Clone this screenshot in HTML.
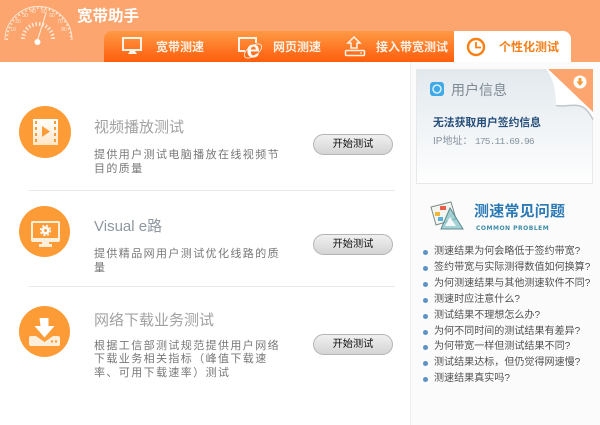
<!DOCTYPE html>
<html lang="zh"><head><meta charset="utf-8"><style>
*{margin:0;padding:0;box-sizing:border-box}
html,body{width:600px;height:425px;overflow:hidden;background:#fff}
body{position:relative;font-family:"Liberation Sans","WenQuanYi Zen Hei","Noto Sans CJK SC",sans-serif}
.a{position:absolute;white-space:nowrap}
.h{left:0;top:0;width:600px;height:62px;background:#fca56f}
.tabs{left:104px;top:31px;width:350px;height:31px;background:linear-gradient(#fd9a45,#ff5e0c);border-radius:8px 0 0 0}
.on{left:454px;top:31px;width:117px;height:31px;background:#fff;border-radius:0 8px 0 0}
.t{top:40px;font-size:12px;line-height:14px;color:#fff0e4;font-weight:bold}
.c{left:19px;width:52px;height:52px;border-radius:50%;background:#fd9b37}
.ti{left:94px;font-size:15px;line-height:18px;color:#a2a2a2}
.d{left:94px;font-size:11px;line-height:13.500px;letter-spacing:1.400px;color:#777;white-space:nowrap}
.b{left:313px;width:80px;height:21px;border-radius:11px;background:linear-gradient(#f0f0f0,#d4d4d4);border:1px solid #b5b5b5;font-size:10.200px;line-height:19px;text-align:center;color:#111}
.hr{left:28px;width:367px;height:1px;background:#eaeaea}
.side{left:410px;top:62px;width:190px;height:363px;background:#fbfbfb;border-left:1px solid #eee}
.card{left:416px;top:69px;width:177px;height:115px;background:linear-gradient(#e2e9ed,#fafbfc 85%,#fff);border:1px solid #e8e8e8}
ul{left:422px;top:244px;list-style:none;font-size:10.050px;line-height:15.900px;color:#505050}
li{padding-left:12px;position:relative}
li:before{content:"";position:absolute;left:1px;top:6px;width:5px;height:5px;border-radius:50%;background:#5b93c7}
</style></head><body>
<div class="a h"></div>
<svg class="a" style="left:0;top:0" width="76" height="48" viewBox="0 0 76 48" fill="none" stroke="#ffe6d2">
<path d="M7 39A31 31 0 1 1 71 39" stroke-width="2" stroke-dasharray="1.500 2.500" transform="translate(0 1)"/>
<path d="M5 40A33.500 33.500 0 0 1 72 40" stroke-width="1"/>
<path d="M23 39A15 15 0 0 1 53 39" stroke-width="4" stroke-dasharray="1.500 2"/>
<path d="M37 42L46 13" stroke-width="1.200"/>
<circle cx="37.500" cy="42" r="3" fill="#fff" stroke="none"/>
<g font-size="5" fill="#ffeadb" stroke="none" font-family="Liberation Sans,sans-serif" text-anchor="middle"><text x="13" y="31">10</text><text x="18" y="23">20</text><text x="25" y="17">30</text><text x="33" y="13">40</text><text x="44" y="13">50</text><text x="52" y="17">60</text><text x="60" y="23">70</text><text x="64" y="31">80</text></g>
</svg>
<div class="a" style="left:77px;top:8px;font-size:15.500px;line-height:18px;font-weight:bold;color:#fff">宽带助手</div>
<div class="a tabs"></div><div class="a on"></div>
<svg class="a" style="left:120px;top:36px" width="26" height="20" viewBox="0 0 26 20" fill="none"><rect x="3" y="2" width="18" height="12" stroke="#fff3e8" stroke-width="2"/><path d="M8 18h9l-2-3h-5z" fill="#fff3e8"/></svg>
<div class="a t" style="left:156px">宽带测速</div>
<svg class="a" style="left:236px;top:36px" width="30" height="26" viewBox="0 0 30 26" fill="none"><path d="M9 15H3V2h17v5" stroke="#fff3e8" stroke-width="2"/><text x="10.500" y="21.500" font-family="Liberation Sans,sans-serif" font-size="24" font-weight="bold" fill="#fffaf4">e</text><ellipse cx="17" cy="15" rx="10" ry="5" transform="rotate(-35 17 15)" stroke="#fff3e8" stroke-width=".8"/></svg>
<div class="a t" style="left:273px">网页测速</div>
<svg class="a" style="left:343px;top:35px" width="24" height="22" viewBox="0 0 24 22" fill="none" stroke="#fff3e8" stroke-width="1.500"><path d="M11 2l6 6h-3v5H8V8H5z"/><rect x="2.500" y="15.500" width="19" height="5" rx="1"/><path d="M17 18h2" stroke-width="1"/></svg>
<div class="a t" style="left:376px">接入带宽测试</div>
<svg class="a" style="left:465px;top:36px" width="22" height="22" viewBox="0 0 22 22" fill="none" stroke="#fa7f12" stroke-width="2.400"><circle cx="11" cy="11" r="8"/><path d="M11 6v5.500h5" stroke-width="1.800"/></svg>
<div class="a t" style="left:499px;color:#f57f1a">个性化测试</div>

<div class="a c" style="top:106px"></div>
<svg class="a" style="left:32px;top:118px" width="27" height="28" viewBox="0 0 27 28"><defs><linearGradient id="g" x1="0" y1="0" x2="0" y2="1"><stop offset="0" stop-color="#fff"/><stop offset="1" stop-color="#ffe6c6"/></linearGradient></defs><rect x="1" y="1" width="25" height="26" fill="url(#g)"/><path d="M3 3h2v3H3zM3 9h2v3H3zM3 15h2v3H3zM3 21h2v3H3zM22 3h2v3h-2zM22 9h2v3h-2zM22 15h2v3h-2zM22 21h2v3h-2z" fill="#fd9b37"/><path d="M10 8l8 5.500-8 5.500z" fill="#fd9b37"/></svg>
<div class="a ti" style="top:119px">视频播放测试</div>
<div class="a d" style="top:149px">提供用户测试电脑播放在线视频节<br>目的质量</div>
<div class="a b" style="top:134px">开始测试</div>
<div class="a hr" style="top:190px"></div>

<div class="a c" style="top:206px;height:51px;width:51px"></div>
<svg class="a" style="left:30px;top:221px" width="32" height="27" viewBox="0 0 32 27"><path d="M3 0h25a2 2 0 0 1 2 2v17a2 2 0 0 1-2 2H19v2h3v3H9v-3h3v-2H3a2 2 0 0 1-2-2V2a2 2 0 0 1 2-2z" fill="#fff0dc"/><rect x="3" y="2" width="25" height="15" fill="#fd9b37"/><circle cx="15.500" cy="9.500" r="2.800" fill="none" stroke="#fff" stroke-width="2.600"/><circle cx="15.500" cy="9.500" r="5" fill="none" stroke="#fff" stroke-width="1.500" stroke-dasharray="2 2"/></svg>
<div class="a ti" style="top:218px;color:#8f97a0;font-size:15px">Visual e路</div>
<div class="a d" style="top:248px">提供精品网用户测试优化线路的质<br>量</div>
<div class="a b" style="top:234px">开始测试</div>
<div class="a hr" style="top:286px"></div>

<div class="a c" style="top:306px;height:51px;width:51px"></div>
<svg class="a" style="left:29px;top:317px" width="32" height="30" viewBox="0 0 32 30"><path d="M10.500 1h9v8h6L15.500 20.500 5.500 9h6z" fill="#fff"/><path d="M0 21a2 2 0 0 1 2-2h5l8.500 6 8.500-6h5a2 2 0 0 1 2 2v6a2 2 0 0 1-2 2H2a2 2 0 0 1-2-2z" fill="#ffeeda"/><circle cx="23" cy="24.500" r="1.200" fill="#fd9b37"/><circle cx="27" cy="24.500" r="1.200" fill="#fd9b37"/></svg>
<div class="a ti" style="top:312px">网络下载业务测试</div>
<div class="a d" style="top:339.500px">根据工信部测试规范提供用户网络<br>下载业务相关指标（峰值下载速<br>率、可用下载速率）测试</div>
<div class="a b" style="top:334px">开始测试</div>

<div class="a side"></div>
<div class="a card"></div>
<svg class="a" style="left:544px;top:69px" width="50" height="52" viewBox="0 0 50 52"><path d="M4 0h45v43z" fill="#fca56f"/><path d="M12 36C22 38 34 32 42 40c3 3 5 6 7 10v-7L4 0h-2c8 10 10 24 10 36z" fill="#fff"/><path d="M12 36.500c9 2 22-4 30 4 3 3 5 6 7 10" fill="none" stroke="#aeb4b8" stroke-width="1.500" opacity=".7"/><circle cx="36" cy="13" r="6.500" fill="#fff"/><path d="M34.500 9h3v3.500h2L36 17l-3.500-4.500h2z" fill="#f39a3a"/></svg>
<svg class="a" style="left:430px;top:82px" width="14" height="14" viewBox="0 0 14 14"><rect width="14" height="14" rx="3" fill="#3fa9e8"/><circle cx="7" cy="7" r="4" fill="none" stroke="#d8f1ff" stroke-width="1.500"/></svg>
<div class="a" style="left:451px;top:81px;font-size:14px;line-height:18px;color:#7e8a94">用户信息</div>
<div class="a" style="left:433px;top:116px;font-size:10.800px;line-height:14px;font-weight:bold;color:#244d7a">无法获取用户签约信息</div>
<div class="a" style="left:433px;top:135px;font-size:10px;line-height:14px;color:#8592a0">IP地址：</div>
<div class="a" style="left:475px;top:135px;font-family:'Liberation Mono',monospace;font-size:9.500px;letter-spacing:-.8px;line-height:14px;color:#8592a0">175.11.69.96</div>

<svg class="a" style="left:430px;top:200px" width="36" height="32" viewBox="0 0 36 32"><path d="M1 7l20-5 5 17-20 6z" fill="#f5f5f0" stroke="#7a8a8a"/><rect x="10" y="6" width="6" height="4" fill="#e8604c"/><rect x="5" y="12" width="5" height="4" fill="#f0b63c"/><rect x="8" y="17" width="5" height="4" fill="#5ab0d8"/><path d="M20 8L33 29H11z" fill="#7ec0c4" fill-opacity=".7" stroke="#5c8a90"/><path d="M20 17l6 9H15z" fill="#f4f8f8"/></svg>
<div class="a" style="left:474px;top:203px;font-size:15px;line-height:18px;font-weight:bold;color:#2b79b5;letter-spacing:.2px">测速常见问题</div>
<div class="a" style="left:476px;top:224px;font-family:'DejaVu Sans',sans-serif;font-size:6px;font-weight:bold;line-height:9px;letter-spacing:.5px;color:#3d8ca8">COMMON PROBLEM</div>
<ul class="a">
<li>测速结果为何会略低于签约带宽?</li>
<li>签约带宽与实际测得数值如何换算?</li>
<li>为何测速结果与其他测速软件不同?</li>
<li>测速时应注意什么?</li>
<li>测试结果不理想怎么办?</li>
<li>为何不同时间的测试结果有差异?</li>
<li>为何带宽一样但测试结果不同?</li>
<li>测试结果达标，但仍觉得网速慢?</li>
<li>测速结果真实吗?</li>
</ul>
</body></html>
